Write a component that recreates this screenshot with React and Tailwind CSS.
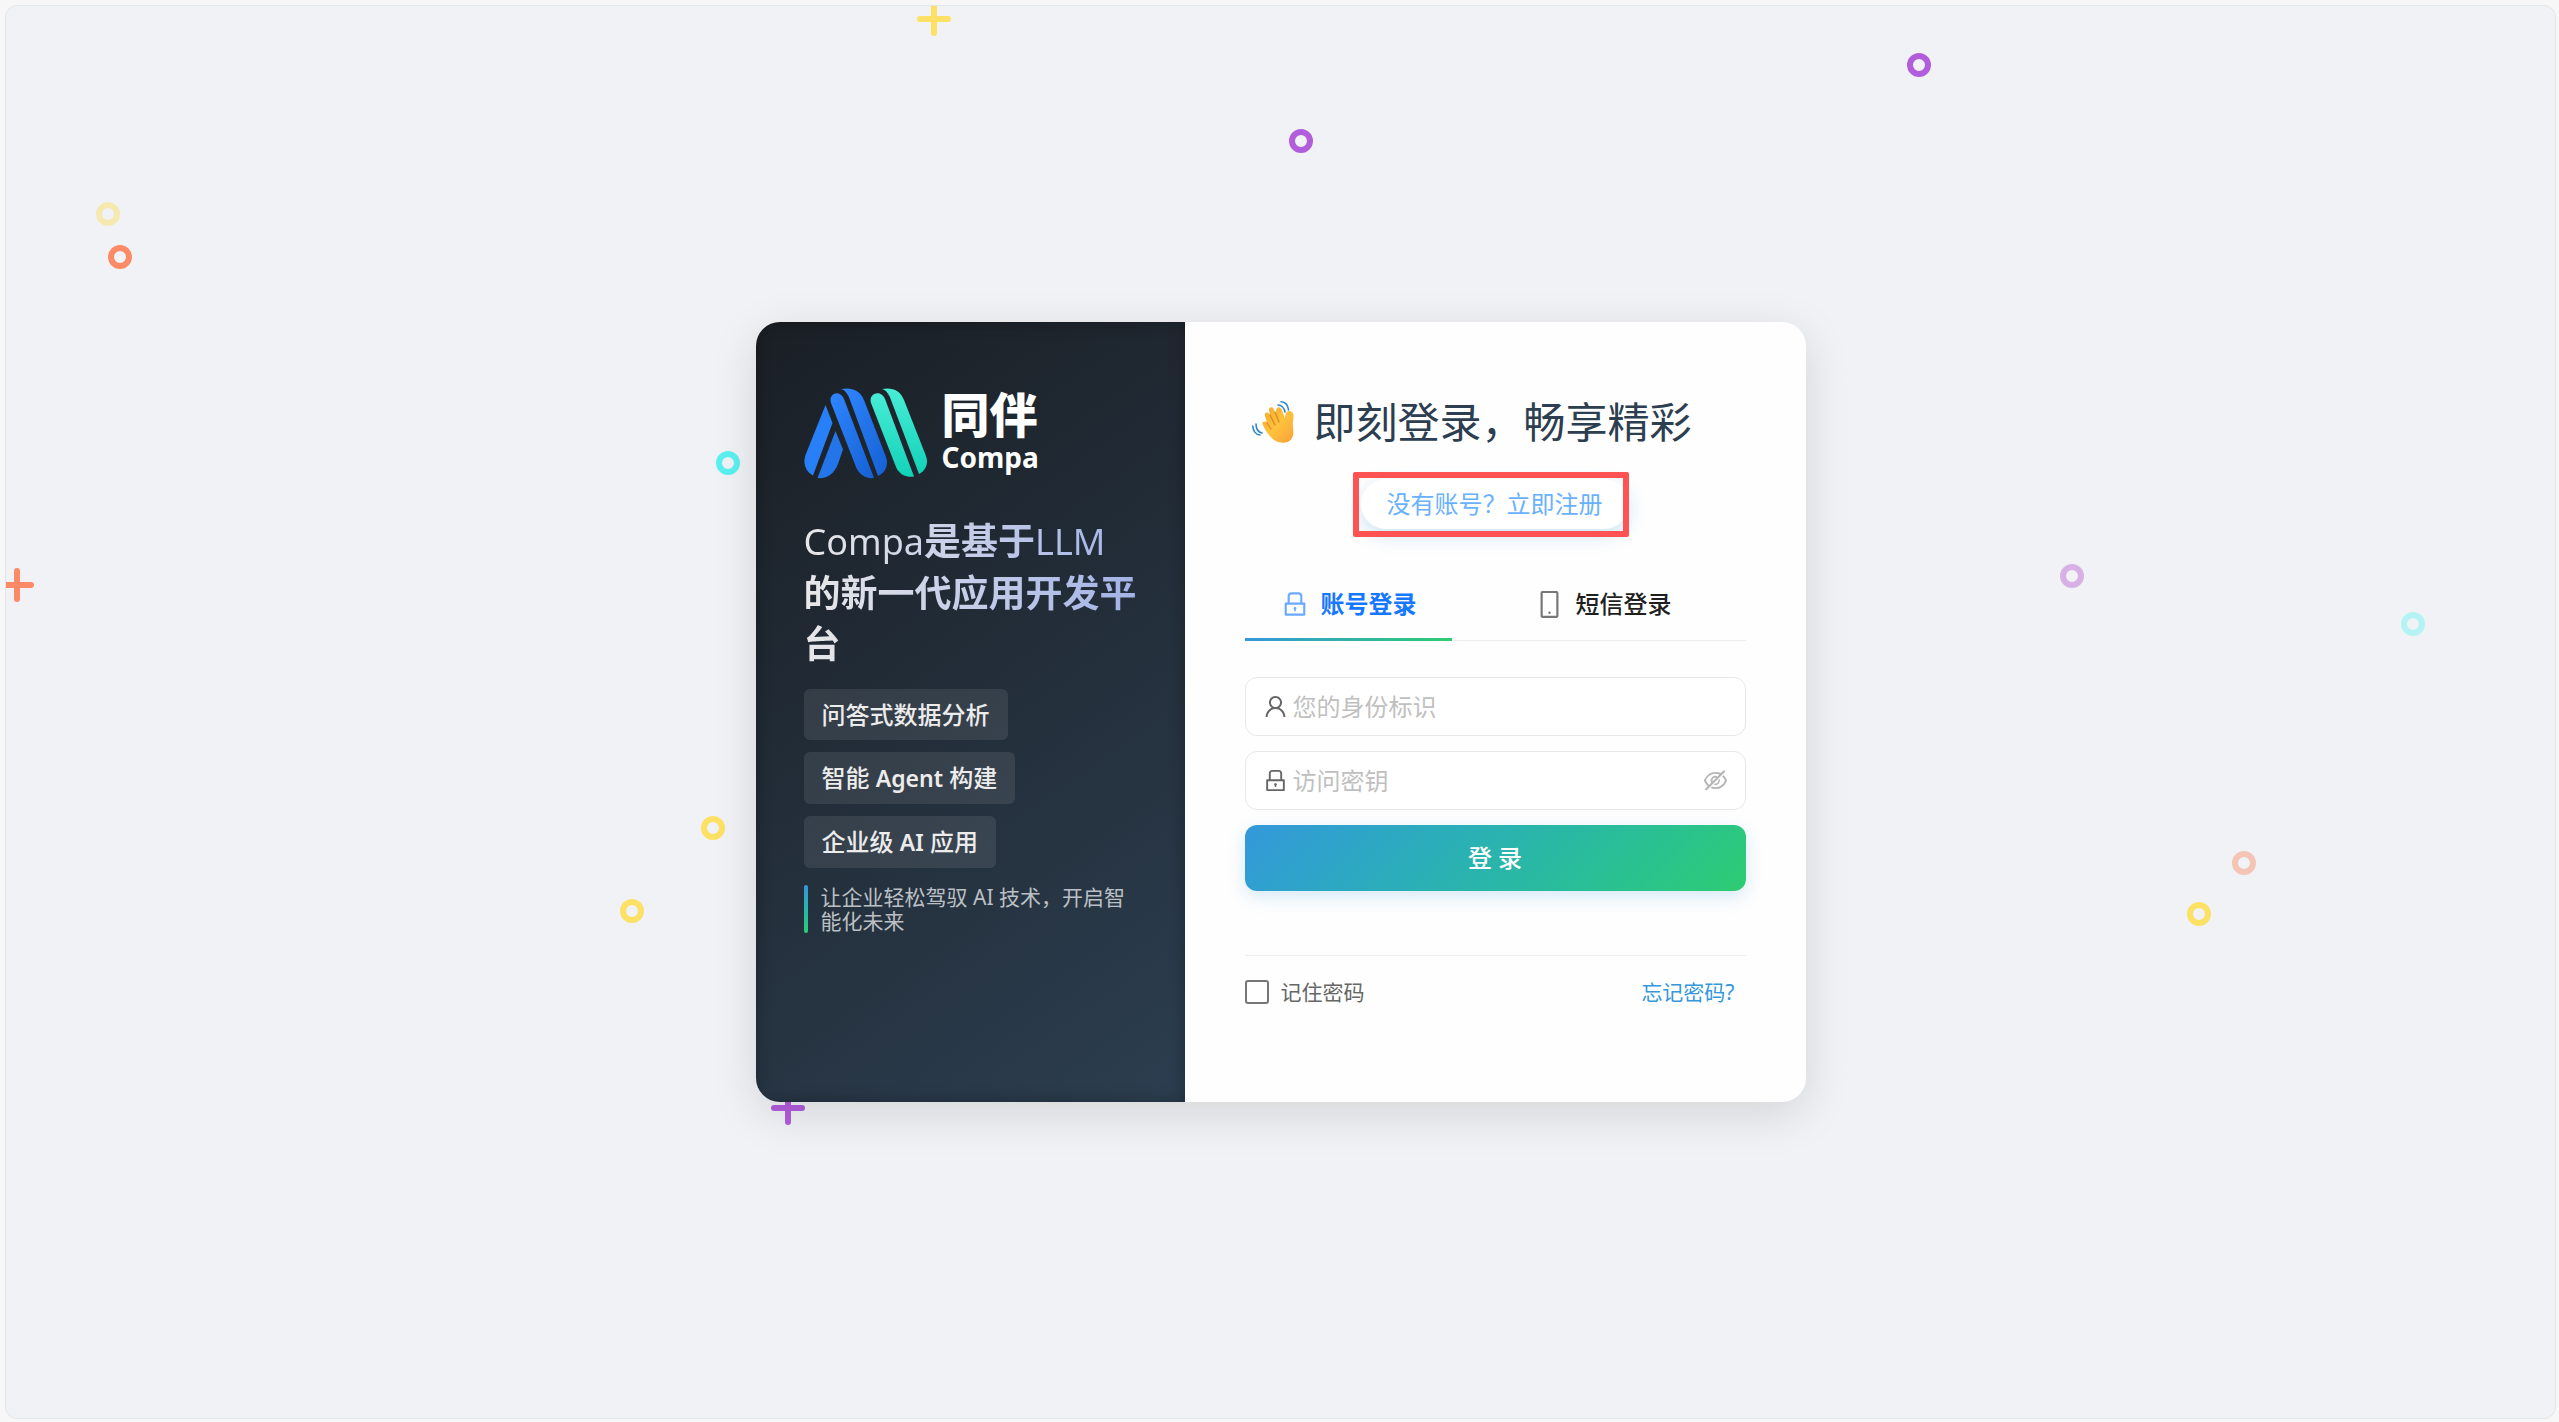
import React, { useState } from "react";
import { AiOutlineLock, AiOutlineMobile, AiOutlineUser, AiOutlineEyeInvisible } from "react-icons/ai";

// Floating shapes behind the card, centre points in percent of the frame
const shapes = [
  { type: "plus", x: 36.41, y: 0.92, color: "#fde164" },
  { type: "plus", x: 0.44, y: 41.0, color: "#fb8b66" },
  { type: "plus", x: 30.68, y: 78.03, color: "#b25ddb" },
  { type: "ring", x: 75.03, y: 4.2, color: "#b25ddb" },
  { type: "ring", x: 50.82, y: 9.57, color: "#b25ddb" },
  { type: "ring", x: 4.0, y: 14.7, color: "#f5e9b0" },
  { type: "ring", x: 4.47, y: 17.76, color: "#fb8b66" },
  { type: "ring", x: 28.32, y: 32.4, color: "#5cf0f0" },
  { type: "ring", x: 27.74, y: 58.2, color: "#fde164" },
  { type: "ring", x: 24.54, y: 64.07, color: "#fde164" },
  { type: "ring", x: 81.05, y: 40.35, color: "#d8b0e8" },
  { type: "ring", x: 94.43, y: 43.8, color: "#b4f3f4" },
  { type: "ring", x: 87.8, y: 60.66, color: "#f5c4b4" },
  { type: "ring", x: 86.04, y: 64.3, color: "#fde164" },
];

const tags = [
  { before: "问答式数据分析" },
  { before: "智能 ", latin: "Agent", after: " 构建" },
  { before: "企业级 ", latin: "AI", after: " 应用" },
];

function Shape({ type, x, y, color }) {
  return (
    <svg
      viewBox="-18 -18 36 36"
      className="absolute size-9 -translate-x-1/2 -translate-y-1/2"
      style={{ left: `${x}%`, top: `${y}%` }}
      fill="none"
      stroke={color}
      strokeWidth="6"
      strokeLinecap="round"
      aria-hidden="true"
    >
      {type === "plus" ? <path d="M-14 0H14M0 -14V14" /> : <circle r="9" />}
    </svg>
  );
}

function Logo() {
  return (
    <div className="flex h-[92px] items-center gap-[14px]">
      <svg viewBox="0 0 124 91" className="h-[91px] w-[124px]" aria-hidden="true">
        <defs>
          <linearGradient id="blue" x1="0" y1="0" x2="1" y2="1">
            <stop offset="0" stopColor="#2f86ff" />
            <stop offset="1" stopColor="#1560d4" />
          </linearGradient>
          <linearGradient id="teal" x1="0" y1="0" x2="0" y2="1">
            <stop offset="0" stopColor="#48ecd6" />
            <stop offset="1" stopColor="#12d2b8" />
          </linearGradient>
        </defs>
        <path fill="#2880f8" d="M21.5 17L28.5 35L9 87.5C2 84 -1.5 76 1.5 67Z" />
        <path fill="#2474ea" d="M31.5 43L39 61.5L34 76C30 86 23 91 13.5 90Z" />
        <path fill="url(#blue)" d="M27 15C24 5 36 1 40 11L70 90C61 91 55 86 52 79Z" />
        <path fill="url(#blue)" d="M37 1C47 -1 56 2 60 12L82 69C85 77 81 85 74 88L46 12C44 6 41 2 37 1Z" />
        <path fill="url(#teal)" d="M67 15C64 5 77 1 81 11L110 88.5C102 90 95 86 92 79Z" />
        <path fill="url(#teal)" d="M78 1C88 -1 96 2 100 12L122 68C125 76 121 83 115 86L87 12C85 6 82 2 78 1Z" />
      </svg>
      <div className="flex flex-col gap-1 text-white">
        <span className="text-[48px] leading-[44px] font-black">同伴</span>
        <span className="text-[28px] leading-8 font-bold">Compa</span>
      </div>
    </div>
  );
}

function WavingHand() {
  return (
    <svg viewBox="0 0 42 42" className="size-[42px]" aria-hidden="true">
      <defs>
        <linearGradient id="hand" x1="0" y1="0" x2="1" y2="1">
          <stop offset="0" stopColor="#f5a92a" />
          <stop offset="0.5" stopColor="#ffc23d" />
          <stop offset="1" stopColor="#f8a038" />
        </linearGradient>
      </defs>
      <path
        fill="url(#hand)"
        d="M11 24C9 21 13 19 15 22L13 15C12 11 16 10 18 14L17 9C17 6 21 5 22 9L24 13C23 6 28 4 30 9L33 18C33 14 34 10 37 10C42 10 42 15 41 20C40 25 43 32 40 37C37 43 28 43 22 39C17 35 13 29 11 24Z"
      />
      <path stroke="#df8824" strokeWidth="1.3" strokeLinecap="round" fill="none" d="M15 22L19 28M18 14L23 24M23 11L27 21" />
      <path stroke="#2f86c8" strokeWidth="1.6" strokeLinecap="round" fill="none" d="M26 4C30 4 32 7 33 11M29 0.8C34 1 36 5 36.5 9M4 23C4 28 6 31 10 32M0.8 25C1 30 4 34 8 34" />
    </svg>
  );
}

export default function App() {
  const [tab, setTab] = useState("account");
  const [showPassword, setShowPassword] = useState(false);

  return (
    <div className="flex h-screen bg-[#f7f7f8] pt-[5px] pr-[3px] pb-[3px] pl-[5px] font-['Noto_Sans','Noto_Sans_CJK_SC',sans-serif]">
      <div className="relative flex flex-1 items-center justify-center overflow-hidden rounded-xl border border-[#e3e5e8] bg-[#f0f2f5]">
        {shapes.map((s, i) => (
          <Shape key={i} {...s} />
        ))}

        <main className="relative flex min-h-[780px] w-full max-w-[1050px] overflow-hidden rounded-3xl bg-[#fefefe] shadow-[0_12px_48px_rgba(0,0,0,0.12)]">
          {/* Brand panel */}
          <section className="flex w-[429px] shrink-0 flex-col items-start bg-linear-145 from-[#1a1f25] to-[#2c3e50] px-12 pt-[65px] shadow-[inset_0_0_15px_rgba(0,0,0,0.3)]">
            <Logo />
            <h1 className="mt-9 bg-linear-to-r from-[#e8e8e8] to-[#a3b2e6] bg-clip-text text-[37px] leading-[51px] font-bold text-transparent">
              <span className="text-[36px] font-normal">Compa</span>是基于<span className="text-[36px] font-normal">LLM</span>
              <br />
              的新一代应用开发平台
            </h1>
            <ul className="mt-5 flex flex-col items-start gap-3">
              {tags.map((tag) => (
                <li key={tag.before} className="rounded-md bg-white/9 px-[18px] py-[9px] text-2xl leading-[33px] font-medium text-[#ececec]">
                  {tag.before}
                  {tag.latin && <span className="text-[23px] font-semibold">{tag.latin}</span>}
                  {tag.after}
                </li>
              ))}
            </ul>
            <div className="mt-[17px] flex gap-[13px]">
              <span className="w-1 shrink-0 rounded-full bg-linear-to-b from-[#3498db] to-[#2ecc71]" />
              <p className="text-[21px] leading-6 text-[#bcc0c4]">让企业轻松驾驭 AI 技术，开启智能化未来</p>
            </div>
          </section>

          {/* Login form */}
          <section className="flex flex-1 flex-col px-[60px] pt-[71px]">
            <h2 className="flex items-center gap-5 pl-[7px] text-[42px] leading-[57px] text-[#2c3e50]">
              <WavingHand />
              即刻登录，畅享精彩
            </h2>

            <div className="relative mt-[29px] ml-[116px] self-start">
              <button className="h-[50px] rounded-full bg-white px-[26px] text-2xl text-[#69b1ff] shadow-[0_6px_18px_rgba(52,152,219,0.25)]">
                没有账号？立即注册
              </button>
              {/* Highlight frame over the register button */}
              <span className="pointer-events-none absolute -top-[7px] right-0 -bottom-2 -left-2 rounded-xs border-6 border-[#ff5252]" />
            </div>

            <div className="mt-[41px] flex border-b border-[#eeeeee] text-2xl" role="tablist">
              <button
                role="tab"
                aria-selected={tab === "account"}
                onClick={() => setTab("account")}
                className="-mb-px flex h-[71px] w-[207px] items-center justify-center gap-[11px] border-b-3 font-bold text-[#1677ff] [border-image:linear-gradient(90deg,#3498db,#2ecc71)_1]"
              >
                <AiOutlineLock className="size-[30px] text-[#69a9ff]" />
                账号登录
              </button>
              <button
                role="tab"
                aria-selected={tab === "sms"}
                onClick={() => setTab("sms")}
                className="ml-[82px] flex items-center gap-[11px] pb-0.5 font-medium text-[#1f1f1f]"
              >
                <AiOutlineMobile className="size-[31px] text-[#777777]" />
                短信登录
              </button>
            </div>

            <form className="mt-9 flex flex-col" onSubmit={(e) => e.preventDefault()}>
              <label className="flex h-[59px] items-center gap-1 rounded-xl border border-[#e8e8e8] bg-white px-4">
                <AiOutlineUser className="size-[27px] text-[#666666]" />
                <input
                  aria-label="您的身份标识"
                  placeholder="您的身份标识"
                  className="min-w-0 flex-1 text-2xl outline-none placeholder:text-[#bfbfbf]"
                />
              </label>
              <div className="mt-[15px] flex h-[59px] items-center gap-1 rounded-xl border border-[#e8e8e8] bg-white px-4">
                <AiOutlineLock className="size-[27px] text-[#666666]" />
                <input
                  type={showPassword ? "text" : "password"}
                  aria-label="访问密钥"
                  placeholder="访问密钥"
                  className="min-w-0 flex-1 text-2xl outline-none placeholder:text-[#bfbfbf]"
                />
                <button type="button" aria-label="显示密码" onClick={() => setShowPassword(!showPassword)}>
                  <AiOutlineEyeInvisible className="size-[27px] text-[#b4b4b4]" />
                </button>
              </div>
              <button
                type="submit"
                className="mt-[15px] h-[66px] rounded-xl bg-linear-135 from-[#3498db] to-[#2ecc71] text-2xl font-medium text-white shadow-[0_6px_18px_rgba(52,152,219,0.2)]"
              >
                登 录
              </button>

              <div className="mt-16 flex items-center justify-between border-t border-[#eeeeee] pt-5 pr-[11px] text-[21px] leading-8">
                <label className="flex items-center gap-3 text-[#666666]">
                  <input type="checkbox" className="size-6 appearance-none rounded-[3px] border-2 border-[#767676] bg-white" />
                  记住密码
                </label>
                <a href="#forgot" className="text-[#3498db]">忘记密码?</a>
              </div>
            </form>
          </section>
        </main>
      </div>
    </div>
  );
}
